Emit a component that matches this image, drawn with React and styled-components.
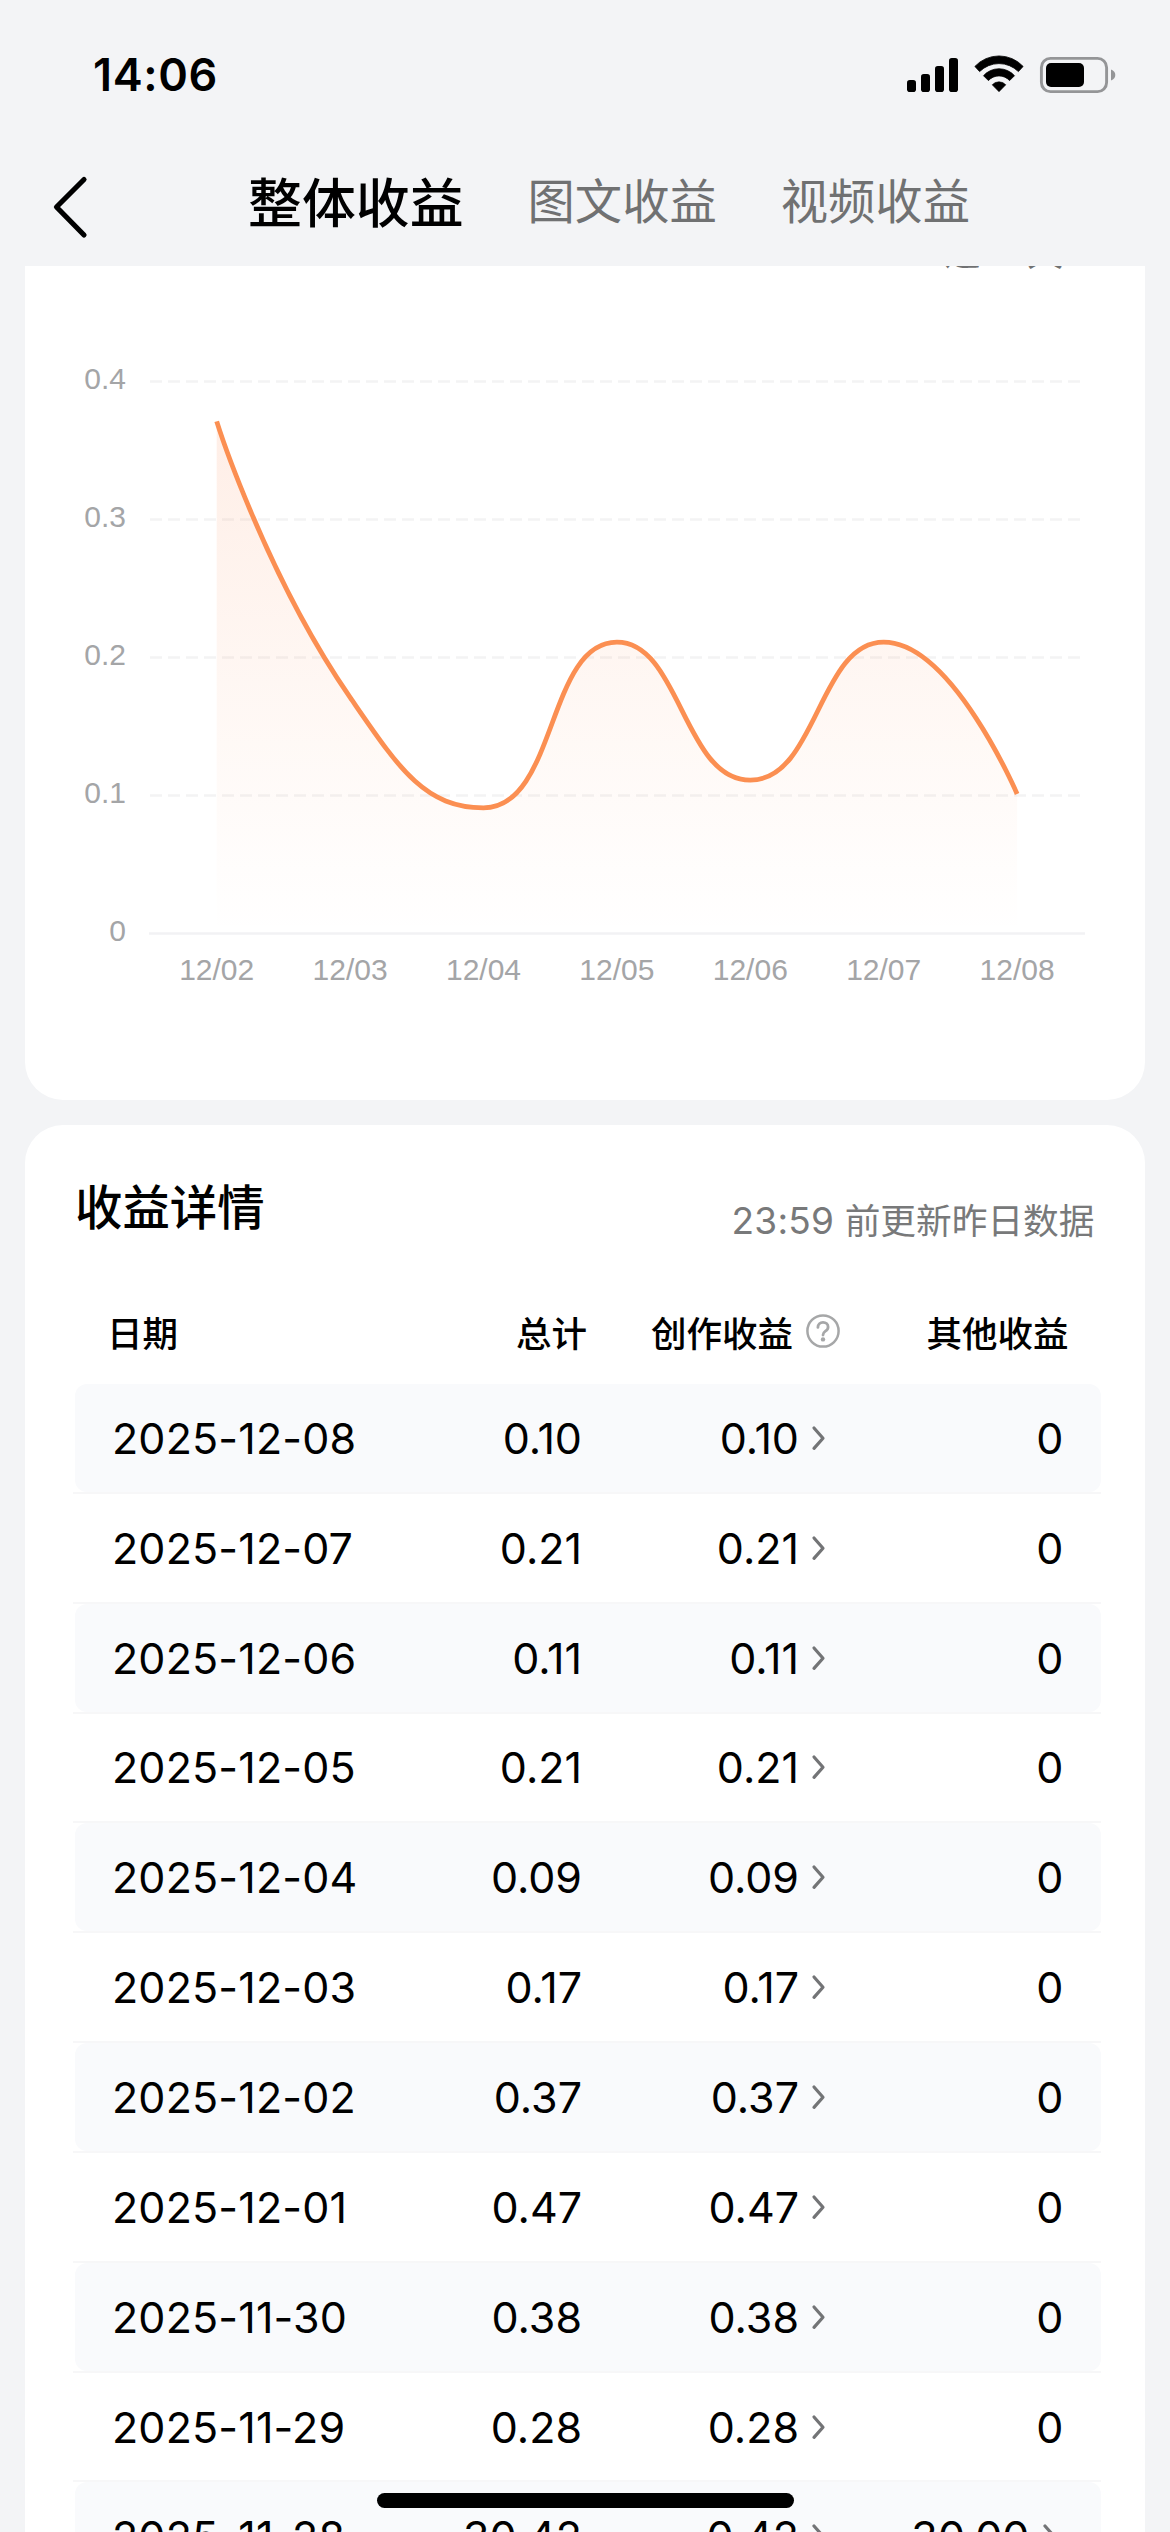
import React from 'react';
import styled, { createGlobalStyle } from 'styled-components';

const Global = createGlobalStyle`
  *, *::before, *::after { box-sizing: border-box; }
  html, body { margin: 0; padding: 0; background: #f3f4f6; }
  body {
    font-family: Inter, "Noto Sans CJK SC", sans-serif;
    color: #000;
    -webkit-font-smoothing: antialiased;
  }
`;

const Screen = styled.div`
  position: relative;
  width: 1170px;
  height: 2532px;
  overflow: hidden;
  background: #f3f4f6;
  display: flex;
  flex-direction: column;
`;

const StatusBar = styled.header`
  flex: none;
  height: 141px;
  padding: 8px 54px 0 93px;
  display: flex;
  align-items: center;
  justify-content: space-between;
`;

const Clock = styled.time`
  font-size: 45px;
  line-height: 60px;
  font-weight: 600;
  letter-spacing: 0.6px;
`;

const StatusIcons = styled.svg`
  display: block;
  width: 210px;
  height: 40px;
`;

const NavBar = styled.nav`
  flex: none;
  height: 125px;
  padding-left: 50px;
  display: flex;
  align-items: flex-start;
`;

const BackIcon = styled.svg`
  display: block;
  width: 40px;
  height: 66px;
  margin: 33px 158px 0 0;
`;

const Tabs = styled.div`
  display: flex;
  padding-top: 26px;
  gap: 64px;
`;

const Tab = styled.span`
  font-size: ${(p) => (p.$active ? 53.9 : 47.3)}px;
  font-weight: ${(p) => (p.$active ? 500 : 400)};
  color: ${(p) => (p.$active ? '#000' : '#707172')};
  line-height: 74px;
  margin-top: ${(p) => (p.$active ? 0 : -2)}px;
  white-space: nowrap;
`;

const Content = styled.main`
  flex: 1;
  min-height: 0;
  overflow: hidden;
  padding: 0 25px;
  display: flex;
  flex-direction: column;
  gap: 25px;
`;

const ChartCard = styled.section`
  flex: none;
  height: 834px;
  background: #fff;
  border-radius: 0 0 38px 38px;
  overflow: hidden;
  display: flex;
  flex-direction: column;
`;

const RangePicker = styled.div`
  flex: none;
  height: 40px;
  margin: -33px 0 -3px;
  padding-right: 82px;
  display: flex;
  justify-content: flex-end;
  align-items: flex-end;
  font-size: 36px;
  line-height: 40px;
  word-spacing: 3px;
  color: #707172;
`;

const ChartSvg = styled.svg`
  display: block;
  width: 1120px;
  height: 760px;
  text { font-family: "Liberation Sans", Arial, sans-serif; font-size: 30px; fill: #a4a5a7; }
`;

const DetailCard = styled.section`
  flex: none;
  background: #fff;
  border-radius: 38px 38px 0 0;
  padding: 0 44.5px 0 48px;
`;

const DetailHead = styled.div`
  height: 167px;
  padding: 0 6px 0 1px;
  display: flex;
  justify-content: space-between;
`;

const Title = styled.h2`
  margin: 46px 0 0 1px;
  font-size: 47.4px;
  line-height: 74px;
  font-weight: 500;
`;

const UpdateNote = styled.span`
  margin-top: 66px;
  font-size: 35.7px;
  line-height: 60px;
  color: #78797a;
`;

const UpdateTime = styled.time`
  font-size: 37px;
  letter-spacing: 0.2px;
`;

const HeadRow = styled.div`
  display: grid;
  grid-template-columns: 301px 213px 255px 1fr;
  align-items: center;
  height: 92px;
  font-size: 35.5px;
  font-weight: 500;
  padding-bottom: 14px;
`;

const HeadCell = styled.div`
  display: flex;
  align-items: center;
  gap: 12px;
  justify-content: ${(p) => (p.$left ? 'flex-start' : 'flex-end')};
  padding-left: ${(p) => (p.$left ? 34 : 0)}px;
  padding-right: ${(p) => p.$right || 0}px;
  white-space: nowrap;
`;

const RowLine = styled.div`
  height: 109.85px;
  padding: 0 0 0 2px;
  border-bottom: 2px solid #f7f7f8;
`;

const Row = styled.div`
  display: grid;
  grid-template-columns: 299px 213px 255px 1fr;
  align-items: center;
  height: 100%;
  border-radius: 12px;
  background: ${(p) => (p.$shade ? '#f9fafc' : '#fff')};
  font-size: 43px;
  line-height: 60px;
`;

const Cell = styled.div`
  display: flex;
  align-items: center;
  gap: 12px;
  justify-content: ${(p) => (p.$left ? 'flex-start' : 'flex-end')};
  padding-left: ${(p) => (p.$left ? 37 : 0)}px;
  padding-right: ${(p) => p.$right || 0}px;
  letter-spacing: ${(p) => (p.$left ? 0.15 : 0)}px;
  white-space: nowrap;
`;

const SmallIcon = styled.svg`
  display: block;
  flex: none;
  width: ${(p) => p.$w}px;
  height: ${(p) => p.$h}px;
`;

const HomeIndicator = styled.div`
  position: absolute;
  left: 377px;
  top: 2493px;
  width: 417px;
  height: 15px;
  border-radius: 8px;
  background: #000;
`;

const rows = [
  ['2025-12-08', '0.10', '0.10', '0'],
  ['2025-12-07', '0.21', '0.21', '0'],
  ['2025-12-06', '0.11', '0.11', '0'],
  ['2025-12-05', '0.21', '0.21', '0'],
  ['2025-12-04', '0.09', '0.09', '0'],
  ['2025-12-03', '0.17', '0.17', '0'],
  ['2025-12-02', '0.37', '0.37', '0'],
  ['2025-12-01', '0.47', '0.47', '0'],
  ['2025-11-30', '0.38', '0.38', '0'],
  ['2025-11-29', '0.28', '0.28', '0'],
  ['2025-11-28', '30.42', '0.42', '30.00'],
];

const series = [
  ['12/02', 0.37],
  ['12/03', 0.17],
  ['12/04', 0.09],
  ['12/05', 0.21],
  ['12/06', 0.11],
  ['12/07', 0.21],
  ['12/08', 0.1],
];

const BASE = 663.5;
const LEFT = 125;
const STEP = 133.4;
const yOf = (v) => BASE - v * 1380;
const xOf = (i) => LEFT + STEP * (i + 0.5);
const clamp = (v, a, b) => Math.max(Math.min(a, b), Math.min(Math.max(a, b), v));

function smoothPath(pts, smooth = 0.5) {
  let d = 'M' + pts[0].join(' ');
  let c0 = pts[0];
  for (let i = 1; i < pts.length; i++) {
    const prev = pts[i - 1];
    const cur = pts[i];
    const next = pts[i + 1];
    let c1 = cur;
    let nextC0 = cur;
    if (next) {
      const lp = Math.hypot(cur[0] - prev[0], cur[1] - prev[1]);
      const ln = Math.hypot(next[0] - cur[0], next[1] - cur[1]);
      const ratio = ln / (ln + lp);
      const n = [0, 1].map((k) => clamp(cur[k] + (next[k] - prev[k]) * smooth * ratio, cur[k], next[k]));
      c1 = [0, 1].map((k) => clamp(cur[k] - ((n[k] - cur[k]) * lp) / ln, prev[k], cur[k]));
      nextC0 = [0, 1].map((k) => cur[k] + ((cur[k] - c1[k]) * ln) / lp);
    }
    d += ' C' + [...c0, ...c1, ...cur].map((v) => v.toFixed(2)).join(' ');
    c0 = nextC0;
  }
  return d;
}

function Chart() {
  const pts = series.map(([, v], i) => [xOf(i), yOf(v) - 1.5]);
  const line = smoothPath(pts);
  const area = line + ' L' + xOf(6) + ' ' + BASE + ' L' + xOf(0) + ' ' + BASE + ' Z';
  return (
    <ChartSvg viewBox="0 0 1120 760">
      <defs>
        <linearGradient id="fade" x1="0" y1="0" x2="0" y2="1">
          <stop offset="0" stopColor="#fb8650" stopOpacity="0.14" />
          <stop offset="1" stopColor="#fb8f52" stopOpacity="0" />
        </linearGradient>
      </defs>
      {[0.4, 0.3, 0.2, 0.1].map((v) => (
        <line key={v} x1={LEFT} x2="1055" y1={yOf(v)} y2={yOf(v)} stroke="#f3f3f4" strokeWidth="2.5" strokeDasharray="12 6" />
      ))}
      <line x1="124" x2="1060" y1={BASE} y2={BASE} stroke="#f2f2f4" strokeWidth="2.6" />
      {[0.4, 0.3, 0.2, 0.1, 0].map((v) => (
        <text key={v} x="101" y={yOf(v) + 7} textAnchor="end">{v}</text>
      ))}
      {series.map(([label], i) => (
        <text key={label} x={xOf(i)} y="710" textAnchor="middle">{label}</text>
      ))}
      <path d={area} fill="url(#fade)" />
      <path d={line} fill="none" stroke="#fb8f52" strokeWidth="4.8" strokeLinejoin="bevel" />
    </ChartSvg>
  );
}

const Chevron = () => (
  <SmallIcon $w={16} $h={28} viewBox="0 0 16 28">
    <path d="M3 4 L12 14.2 L3 24.4" fill="none" stroke="#737476" strokeWidth="3.2" strokeLinecap="round" strokeLinejoin="round" />
  </SmallIcon>
);

const Help = () => (
  <SmallIcon $w={36} $h={36} viewBox="0 0 36 36" fill="none" stroke="#a6a7a8" strokeLinecap="round">
    <circle cx="18" cy="18" r="15.6" strokeWidth="2.5" />
    <path d="M12.9 14.4 C12.9 11.2 15.1 9.4 18 9.4 C20.9 9.4 23.1 11.3 23.1 13.9 C23.1 16 22 17.1 20.4 18.2 C18.8 19.3 18 20.1 18 22.1" strokeWidth="2.8" />
    <circle cx="18" cy="26.4" r="2.2" fill="#a6a7a8" stroke="none" />
  </SmallIcon>
);

export default function App() {
  return (
    <Screen>
      <Global />
      <StatusBar>
        <Clock>14:06</Clock>
        <StatusIcons viewBox="906 54 210 40">
          <rect x="907" y="79" width="9" height="12" rx="2.8" />
          <rect x="921" y="73" width="9" height="18" rx="2.8" />
          <rect x="935" y="65" width="9" height="26" rx="2.8" />
          <rect x="949" y="57" width="9" height="34" rx="2.8" />
          <path d="M974.9 65.4 A33 33 0 0 1 1023.1 65.4 L1018.4 70.6 A27.5 27.5 0 0 0 979.6 70.6 Z" stroke="#000" strokeWidth="0.8" strokeLinejoin="round" />
          <path d="M983.5 74.7 A20.8 20.8 0 0 1 1014.5 74.7 L1009.6 79.6 A14.3 14.3 0 0 0 988.4 79.6 Z" stroke="#000" strokeWidth="0.8" strokeLinejoin="round" />
          <path d="M992.2 83.8 A9.2 9.2 0 0 1 1005.8 83.8 L999 90.7 Z" stroke="#000" strokeWidth="0.6" strokeLinejoin="round" />
          <rect x="1041.4" y="57.4" width="65.2" height="33.2" rx="9" fill="none" stroke="#949597" strokeWidth="2.9" />
          <rect x="1046" y="62" width="38" height="24" rx="5" />
          <path d="M1111 68.5 C1114 69.5 1115.3 71.5 1115.3 74 C1115.3 76.5 1114 78.5 1111 79.5 Z" fill="#949597" />
        </StatusIcons>
      </StatusBar>
      <NavBar>
        <BackIcon viewBox="50 174 40 66">
          <path d="M84 179.5 L56.5 207 L84 235" fill="none" stroke="#000" strokeWidth="5.2" strokeLinecap="round" strokeLinejoin="round" />
        </BackIcon>
        <Tabs>
          <Tab $active>整体收益</Tab>
          <Tab>图文收益</Tab>
          <Tab>视频收益</Tab>
        </Tabs>
      </NavBar>
      <Content>
        <ChartCard>
          <RangePicker>近 7 天</RangePicker>
          <Chart />
        </ChartCard>
        <DetailCard>
          <DetailHead>
            <Title>收益详情</Title>
            <UpdateNote><UpdateTime>23:59 </UpdateTime>前更新昨日数据</UpdateNote>
          </DetailHead>
          <HeadRow>
            <HeadCell $left>日期</HeadCell>
            <HeadCell>总计</HeadCell>
            <HeadCell $right={1}>创作收益<Help /></HeadCell>
            <HeadCell $right={32}>其他收益</HeadCell>
          </HeadRow>
          {rows.map(([date, total, creation, other], i) => (
            <RowLine key={date}>
              <Row $shade={i % 2 === 0}>
                <Cell $left>{date}</Cell>
                <Cell $right={5}>{total}</Cell>
                <Cell $right={15}>{creation}<Chevron /></Cell>
                <Cell $right={other === '0' ? 37 : 43}>{other}{other !== '0' && <Chevron />}</Cell>
              </Row>
            </RowLine>
          ))}
        </DetailCard>
      </Content>
      <HomeIndicator />
    </Screen>
  );
}
